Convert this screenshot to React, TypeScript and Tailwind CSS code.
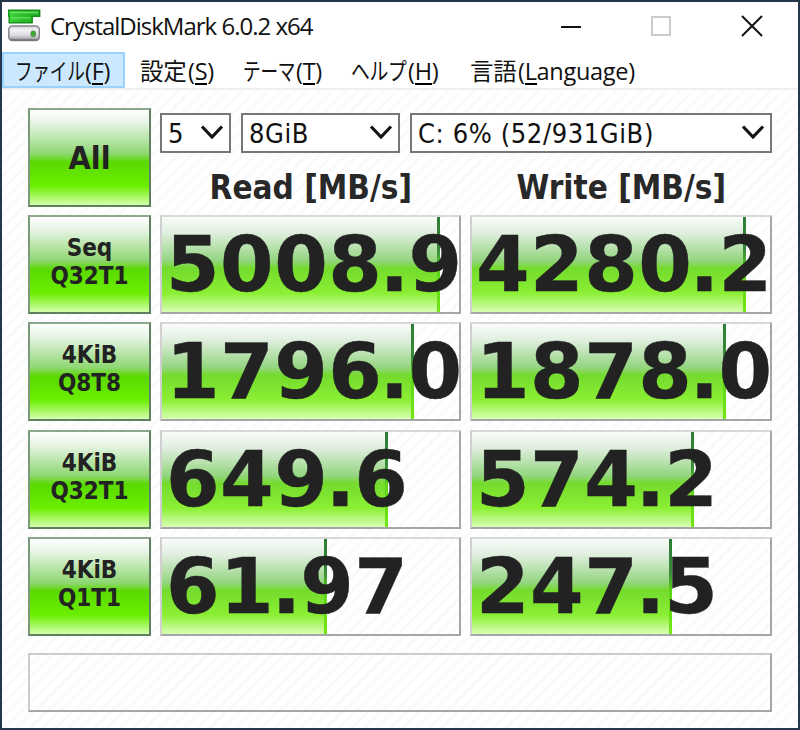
import React from "react";

const UI = "font-['Open_Sans','Noto_Sans_CJK_JP',sans-serif]";
const TAHOMA = "font-['DejaVu_Sans_Condensed','DejaVu_Sans',sans-serif]";
const STRIPES =
  "bg-[repeating-linear-gradient(135deg,#ffffff_0px,#ffffff_4.5px,#fafafa_6px,#fafafa_7.6px,#ffffff_9.1px)]";

function DiskIcon() {
  return (
    <svg width="34" height="34" viewBox="0 0 34 34" className="shrink-0">
      <defs>
        <linearGradient id="disk" x1="0" y1="0" x2="0" y2="1">
          <stop offset="0" stopColor="#d6d6da" />
          <stop offset="0.3" stopColor="#f1f1f3" />
          <stop offset="0.65" stopColor="#dadae0" />
          <stop offset="1" stopColor="#8c8c92" />
        </linearGradient>
        <linearGradient id="bar" x1="0" y1="0" x2="1" y2="0">
          <stop offset="0" stopColor="#3fd83a" />
          <stop offset="0.5" stopColor="#2cba2c" />
          <stop offset="1" stopColor="#1fae22" />
        </linearGradient>
      </defs>
      <rect x="1.800" y="17" width="30.500" height="14.500" rx="3.500" fill="url(#disk)" stroke="#85858b" strokeWidth="1.500" />
      <path d="M4 31h26" stroke="#77777c" strokeWidth="1.600" />
      <path d="M1.700 1.200h31v6h-7.500v6.500h-23v-6.500h-.5z" fill="url(#bar)" stroke="#178f1c" strokeWidth="1.400" />
      <path d="M3.500 3.500h27.500M4 8.800h19.500" stroke="#69e35e" strokeWidth="1.300" />
      <rect x="24" y="22" width="4.500" height="5.500" rx="1.500" fill="#3cae32" stroke="#557f50" strokeWidth=".8" />
    </svg>
  );
}

function Combo({ text, className }: { text: string; className: string }) {
  return (
    <div className={`flex h-[40px] items-center justify-between border-2 border-[#777] bg-white pr-[5px] pl-[6px] ${className}`}>
      <span className="pt-[2px] tracking-[0.600px] whitespace-pre">{text}</span>
      <svg width="24" height="17" viewBox="0 0 24 17" className="mb-[1px] shrink-0">
        <path d="M2 2.500 12 13 22 2.500" fill="none" stroke="#151218" strokeWidth="3.200" />
      </svg>
    </div>
  );
}

function GreenButton({ lines, big }: { lines: string[]; big?: boolean }) {
  return (
    <button
      className={`flex h-[99px] w-[123px] flex-col items-center justify-center border-2 border-t-[#8ba88b] border-r-[#5f805f] border-b-[#5f805f] border-l-[#7a9a7a] bg-[linear-gradient(#ffffff_0%,#e6f4e4_14%,#8ed772_46%,#5ad900_55%,#6bef00_80%,#d5ffad_100%)] font-bold text-[#222] ${
        big ? "text-[32px] leading-none" : "pb-[5px] text-[24px] leading-[28px]"
      }`}
    >
      {lines.map((l) => (
        <span key={l}>{l}</span>
      ))}
    </button>
  );
}

function Meter({ value, fill, className }: { value: string; fill: number; className: string }) {
  const [whole, frac] = value.split(".");
  return (
    <div
      className={`relative h-[99px] border-2 border-t-[#d8d8d8] border-r-[#a6a6a6] border-b-[#a6a6a6] border-l-[#d0d0d0] ${STRIPES} ${className}`}
    >
      <div
        className="h-full bg-[linear-gradient(#fafcfa_0%,#dfeede_17%,#93d57f_46%,#74db2d_54%,#8bef33_80%,#d8ffb4_100%)]"
        style={{ width: fill }}
      >
        <div className="ml-auto h-full w-[3px] bg-[linear-gradient(#2d7d36_0%,#398a3a_35%,#5bd417_55%,#72e712_100%)]" />
      </div>
      <div className="absolute top-[8px] left-[4px] font-['DejaVu_Sans',sans-serif] text-[77px] leading-[80px] font-bold tracking-[0.500px] whitespace-nowrap text-[#222] [-webkit-text-stroke:0.4px_#222]">
        {whole}
        <span className="-ml-[2.500px] tracking-[-0.700px]">.</span>
        {frac}
      </div>
    </div>
  );
}

const rows = [
  { lines: ["Seq", "Q32T1"], read: "5008.9", rf: 278, write: "4280.2", wf: 274 },
  { lines: ["4KiB", "Q8T8"], read: "1796.0", rf: 252, write: "1878.0", wf: 254 },
  { lines: ["4KiB", "Q32T1"], read: "649.6", rf: 226, write: "574.2", wf: 222 },
  { lines: ["4KiB", "Q1T1"], read: "61.97", rf: 165, write: "247.5", wf: 200 },
];

function MenuItem({ kana, latin, hot, rest, className, squeeze }: {
  kana: string; latin: string; hot: string; rest?: string; className: string; squeeze: string;
}) {
  return (
    <div className={`flex h-full items-center pt-[3px] whitespace-nowrap ${className}`}>
      <span className={`origin-left ${squeeze}`}>{kana}</span>
      <span>
        {latin}
        <span className="inline-block h-[25px] border-b-2 border-black leading-none">{hot}</span>
        {rest})
      </span>
    </div>
  );
}

export default function App() {
  return (
    <div className={`flex h-[730px] w-[800px] flex-col overflow-hidden border-2 border-[#22384a] bg-white text-[#111] ${UI}`}>
      <header className="flex h-[50px] shrink-0 items-center pl-[5px]">
        <div className="mb-[2px]"><DiskIcon /></div>
        <span className="mb-[3px] ml-[9px] text-[24px] tracking-[-1px]">CrystalDiskMark 6.0.2 x64</span>
        <div className="mb-[2px] ml-auto flex items-center pr-[34px]">
          <svg width="204" height="24" viewBox="0 0 204 24" fill="none">
            <path d="M1 13h20" stroke="#111" strokeWidth="2" />
            <rect x="92" y="3" width="18" height="18" stroke="#ccc" strokeWidth="2" />
            <path d="m182 2 20 20m0-20-20 20" stroke="#111" strokeWidth="2" />
          </svg>
        </div>
      </header>
      <nav className="flex h-[38px] shrink-0 border-b-2 border-[#efefef] text-[23.500px] tracking-[-0.300px]">
        <MenuItem kana="ファイル" latin="(" hot="F" className="w-[123px] border-2 border-[#99d1ff] bg-[#cce8ff] pl-[11px]" squeeze="w-[70px] scale-x-[.75]" />
        <MenuItem kana="設定" latin="(" hot="S" className="w-[103px] pl-[15px]" squeeze="w-[48px]" />
        <MenuItem kana="テーマ" latin="(" hot="T" className="w-[107px] pl-[15px]" squeeze="w-[53px] scale-x-[.75]" />
        <MenuItem kana="ヘルプ" latin="(" hot="H" className="w-[120px] pl-[16px]" squeeze="w-[57px] scale-x-[.8]" />
        <MenuItem kana="言語" latin="(" hot="L" rest="anguage" className="pl-[15px]" squeeze="w-[48px]" />
      </nav>
      <main className={`flex flex-1 flex-col pt-[18px] pl-[26px] ${STRIPES} ${TAHOMA}`}>
        <div className="flex gap-[9px]">
          <GreenButton lines={["All"]} big />
          <div className="h-[99px] w-[612px]">
            <div className="mt-[5px] flex gap-[10px] text-[27px]">
              <Combo text="5" className="w-[71px]" />
              <Combo text="8GiB" className="w-[159px]" />
              <Combo text="C: 6% (52/931GiB)" className="w-[362px]" />
            </div>
            <div className="mt-[15px] flex gap-[9px] text-center text-[33px] leading-[40px] font-bold text-[#282828]">
              <div className="w-[302px]">Read [MB/s]</div>
              <div className="w-[302px]">Write [MB/s]</div>
            </div>
          </div>
        </div>
        <div className="mt-[8px] flex flex-col gap-[8.400px]">
          {rows.map((r) => (
            <div key={r.read} className="flex gap-[9px]">
              <GreenButton lines={r.lines} />
              <Meter value={r.read} fill={r.rf} className="w-[301px]" />
              <Meter value={r.write} fill={r.wf} className="w-[302px]" />
            </div>
          ))}
        </div>
        <div className={`mt-[17px] h-[59px] w-[744px] border-2 border-t-[#ccc] border-r-[#a6a6a6] border-b-[#a6a6a6] border-l-[#ccc] ${STRIPES}`} />
      </main>
    </div>
  );
}
